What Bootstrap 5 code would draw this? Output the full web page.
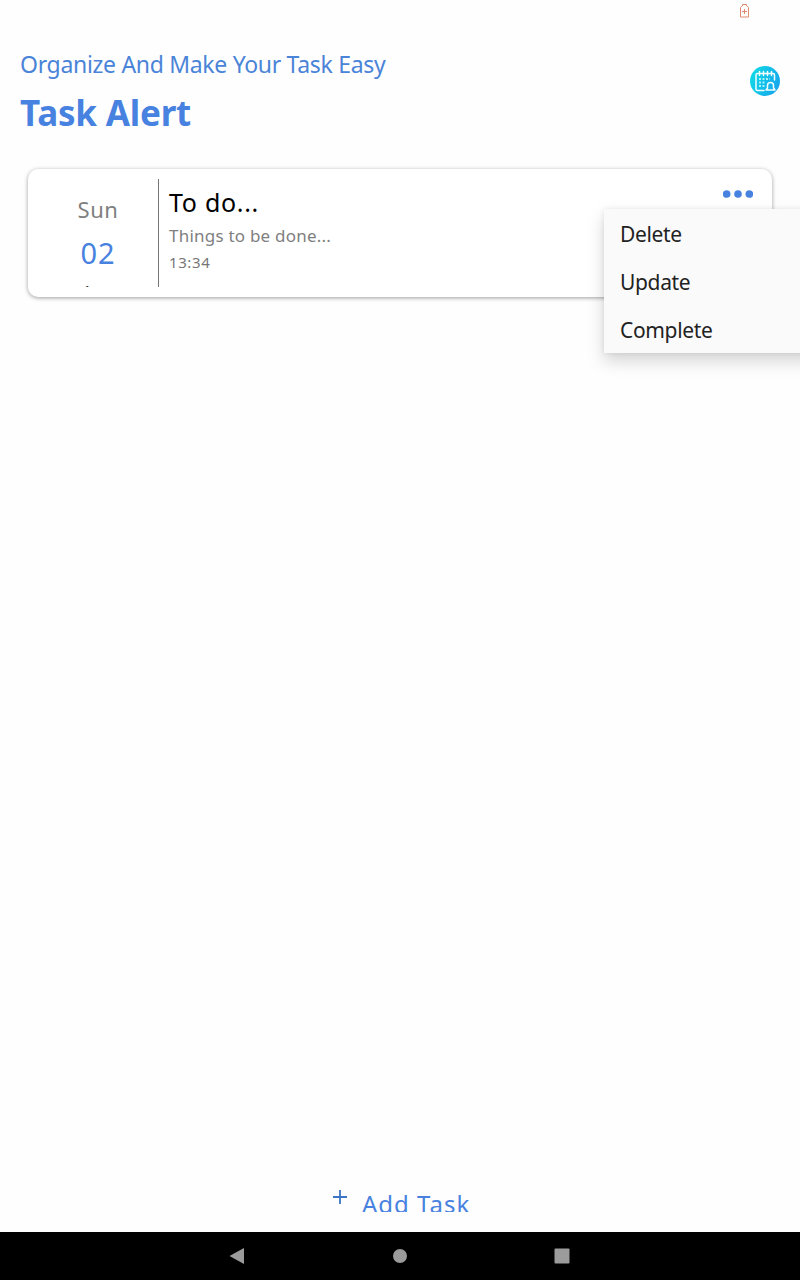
<!DOCTYPE html>
<html lang="en">
<head>
<meta charset="utf-8">
<meta name="viewport" content="width=device-width, initial-scale=1">
<title>Task Alert</title>
<link href="https://cdn.jsdelivr.net/npm/bootstrap@5.3.0/dist/css/bootstrap.min.css" rel="stylesheet">
<style>
body{font-family:"Noto Sans","Open Sans",sans-serif;height:1280px;overflow:hidden;background:#fefefe;white-space:nowrap}
.brand-blue{color:#4882e0}
.status{height:49px;padding:3px 50px 0 0}
.head{height:120px;padding:0 20px}
.tagline{font-size:23px;line-height:30px;letter-spacing:-.31px;color:#4a84d8}
.title{font-size:35px;line-height:44px;margin-top:12px;font-weight:700;letter-spacing:-.2px}
.logo{margin-top:17px}
.task{margin:0 28px;height:128px;border-radius:10px;padding:10px 0;background:#fff;box-shadow:0 1px 4px rgba(0,0,0,.38)}
.date{width:130px;padding:0 0 0 10px;overflow:hidden}
.day{font-size:22px;line-height:30px;margin-top:15px;color:#808080;letter-spacing:.5px}
.num{font-size:29px;line-height:40px;margin-top:9px;letter-spacing:1px}
.month{font-size:18px;line-height:24px;margin-top:7px;color:#333;letter-spacing:1px}
.rule{width:1px;background:#777}
.info{padding-left:10px}
.name{font-size:25px;line-height:34px;margin-top:6px;color:#000;letter-spacing:.7px}
.desc{font-size:17px;line-height:26px;margin-top:4px;color:#808080;letter-spacing:.22px}
.time{font-size:15px;line-height:24px;margin-top:1px;color:#777;letter-spacing:.6px}
.more{margin:11px 19px 0 0}
.popmenu{top:40px;left:576px;width:220px;height:144px;background:#fafafa;box-shadow:0 8px 16px rgba(0,0,0,.17),0 0 5px rgba(0,0,0,.08);z-index:2}
.popmenu li{height:48px;line-height:50px;padding-left:16px;font-size:21px;color:#222;letter-spacing:-.35px}
.add{height:29px;padding-left:333px;margin-bottom:20px;overflow:hidden}
.add span{font-size:24px;line-height:36px;margin:3px 0 0 14px;letter-spacing:1px}
.sysbar{height:48px;background:#000}
</style>
</head>
<body class="d-flex flex-column">
<div class="status d-flex justify-content-end align-items-start">
<svg width="11" height="16" viewBox="0 0 11 16" fill="none" stroke="#e28a70" stroke-width="1"><path d="M3.500 3V1.500h4V3M3.500 2.500 1.500 4.500v9.500h8V4.500L7.500 2.500M5.500 6v5M3 8.500h5"/></svg>
</div>
<header class="head d-flex justify-content-between align-items-start">
<div><div class="tagline">Organize And Make Your Task Easy</div><h1 class="title brand-blue mb-0">Task Alert</h1></div>
<svg class="logo" width="30" height="30" viewBox="0 0 30 30"><defs><linearGradient id="g" x1="0" y1=".3" x2="1" y2=".7"><stop offset="0" stop-color="#12d8e6"/><stop offset="1" stop-color="#15a5ec"/></linearGradient></defs><circle cx="15" cy="15" r="15" fill="url(#g)"/><g fill="none" stroke="#f2feff" stroke-width="1.500" stroke-linecap="round" stroke-linejoin="round"><path d="M14 24.500H7.500Q6 24.500 6 23V9Q6 7.500 7.500 7.500H23Q24.500 7.500 24.500 9V14M9.500 5.500v4M13.500 5.500v4M17.500 5.500v4M21.500 5.500v4"/><path d="M16 24 17.500 22V19.500Q17.500 16.500 20.500 16.500T23.500 19.500V22L25 24Z"/></g><path d="M9 13h11M9 16.500h7M9 20h6" stroke="#a8f2fb" stroke-width="1.800" stroke-dasharray="2 1.500"/></svg>
</header>
<section class="task d-flex position-relative">
<div class="date text-center"><div class="day">Sun</div><div class="num brand-blue">02</div><div class="month">Apr</div></div>
<div class="rule"></div>
<div class="info flex-grow-1"><div class="name">To do...</div><div class="desc">Things to be done...</div><div class="time">13:34</div></div>
<svg class="more" width="30" height="8" viewBox="0 0 30 8" fill="#4882e0"><circle cx="3.700" cy="4" r="3.800"/><circle cx="15" cy="4" r="3.800"/><circle cx="26.300" cy="4" r="3.800"/></svg>
<ul class="popmenu list-unstyled mb-0 position-absolute"><li>Delete</li><li>Update</li><li>Complete</li></ul>
</section>
<div class="add mt-auto d-flex align-items-start brand-blue">
<svg class="mt-1" width="15" height="20" viewBox="0 0 15 20" fill="none" stroke="#3d75c4" stroke-width="1.800"><path d="M0 10h14M7 3v14"/></svg><span>Add Task</span>
</div>
<nav class="sysbar flex-shrink-0"><svg class="d-block" width="800" height="48" viewBox="0 0 800 48" fill="#9b9b9b"><path d="M229.500 24 244 16v16z"/><circle cx="400" cy="24" r="7"/><rect x="554.500" y="16.500" width="15" height="15" rx="1"/></svg></nav>
</body>
</html>
